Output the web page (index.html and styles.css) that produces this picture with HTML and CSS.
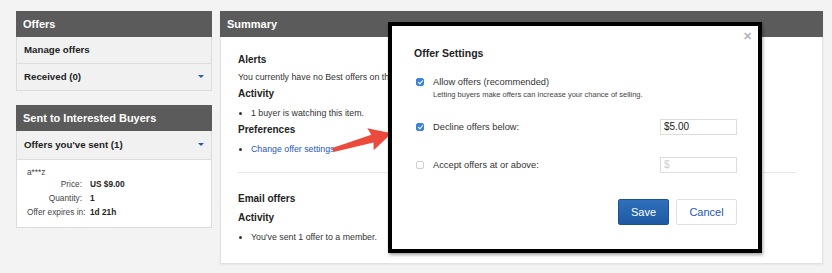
FILE: index.html
```html
<!DOCTYPE html>
<html lang="en">
<head>
    <meta charset="UTF-8">
    <title>Offers</title>
    <link rel="stylesheet" href="styles.css">
</head>
<body>

    <div class="page">
        <!-- Left column -->
        <div class="sidebar">
            <div class="panel">
                <div class="panel-head">Offers</div>
                <div class="row">Manage offers</div>
                <div class="row row-last">Received (0) <span class="caret"></span></div>
            </div>

            <div class="panel panel-sent">
                <div class="panel-head">Sent to Interested Buyers</div>
                <div class="row row-tall">Offers you've sent (1) <span class="caret"></span></div>
                <div class="sent-body">
                    <div class="buyer">a***z</div>
                    <div class="detail"><span class="label">Price:</span><span class="value">US $9.00</span></div>
                    <div class="detail"><span class="label">Quantity:</span><span class="value">1</span></div>
                    <div class="detail"><span class="label">Offer expires in:</span><span class="value">1d 21h</span></div>
                </div>
            </div>
        </div>

        <!-- Summary -->
        <div class="summary">
            <div class="panel-head">Summary</div>
            <div class="summary-body">
                <h3>Alerts</h3>
                <p>You currently have no Best offers on this item.</p>
                <h3>Activity</h3>
                <ul>
                    <li>1 buyer is watching this item.</li>
                </ul>
                <h3>Preferences</h3>
                <ul>
                    <li><a href="#">Change offer settings</a></li>
                </ul>
                <hr>
                <h3 class="email">Email offers</h3>
                <h3>Activity</h3>
                <ul>
                    <li>You've sent 1 offer to a member.</li>
                </ul>
            </div>
        </div>
    </div>

    <!-- Arrow pointing at the dialog -->
    <svg class="arrow" width="70" height="44" viewBox="0 0 70 44">
        <g transform="translate(5,34) rotate(-16)">
            <polygon points="0,-2.2 41,-4 39,-11.5 61,0 39,11.5 41,4 0,2.2" fill="#ec4a3c"/>
        </g>
    </svg>

    <!-- Offer settings dialog -->
    <div class="modal">
        <span class="close">&#x2715;</span>
        <h2>Offer Settings</h2>

        <div class="option">
            <span class="check checked"></span>
            <div>
                <div class="option-label">Allow offers (recommended)</div>
                <div class="hint">Letting buyers make offers can increase your chance of selling.</div>
            </div>
        </div>

        <div class="option option-input">
            <span class="check checked"></span>
            <div class="option-label">Decline offers below:</div>
            <div class="field">$5.00</div>
        </div>

        <div class="option option-input">
            <span class="check"></span>
            <div class="option-label">Accept offers at or above:</div>
            <div class="field placeholder">$</div>
        </div>

        <div class="actions">
            <button class="btn-save">Save</button>
            <button class="btn-cancel">Cancel</button>
        </div>
    </div>

</body>
</html>
```

FILE: styles.css
```css
body {
    font-family: "Liberation Sans", Arial, sans-serif;
    background-color: #f3f3f3;
    margin: 0;
    padding: 0;
    color: #333;
    width: 832px;
    height: 273px;
    overflow: hidden;
    position: relative;
}
.page {
    display: flex;
    gap: 8px;
    padding: 11px 9px 0 16px;
}
.sidebar {
    width: 196px;
    flex-shrink: 0;
}
.panel {
    border: 1px solid #dcdcdc;
    border-top: none;
    background-color: #f1f1f1;
}
.panel-sent {
    margin-top: 14px;
    background-color: #fff;
}
.panel-head {
    background-color: #5b5b5b;
    color: #fff;
    font-weight: bold;
    font-size: 11px;
    height: 26px;
    line-height: 26px;
    padding-left: 7px;
    margin: 0 -1px;
}
.row {
    height: 26px;
    line-height: 26px;
    padding-left: 7px;
    font-size: 9.7px;
    font-weight: bold;
    color: #222;
    border-bottom: 1px solid #dcdcdc;
    background-color: #f1f1f1;
    position: relative;
}
.row-last {
    border-bottom: none;
}
.row-tall {
    height: 28px;
    line-height: 28px;
}
.caret {
    position: absolute;
    right: 7px;
    top: 50%;
    margin-top: -2px;
    border-left: 3px solid transparent;
    border-right: 3px solid transparent;
    border-top: 3px solid #2a5ea8;
}
.sent-body {
    padding: 7px 0 8px 10px;
    font-size: 8.3px;
    color: #444;
}
.buyer {
    line-height: 10px;
}
.detail {
    display: flex;
    height: 14px;
    line-height: 14px;
}
.label {
    width: 55px;
    text-align: right;
    padding-right: 8px;
    white-space: nowrap;
}
.value {
    font-weight: bold;
    color: #222;
}
.summary {
    flex: 1;
    background-color: #fff;
    border: 1px solid #e2e2e2;
    border-top: none;
    height: 252px;
    box-shadow: 0 1px 2px rgba(0, 0, 0, 0.06);
}
.summary-body {
    padding: 12px 17px 0 17px;
}
h3 {
    font-size: 10px;
    margin: 4px 0 0 0;
    color: #222;
    line-height: 14px;
}
p {
    font-size: 8.8px;
    margin: 4px 0 0 0;
    line-height: 12px;
}
ul {
    font-size: 8.8px;
    margin: 6px 0 0 0;
    padding-left: 13px;
    line-height: 12px;
}
a {
    color: #2557b8;
    text-decoration: none;
}
hr {
    border: none;
    border-top: 1px solid #e6e6e6;
    margin: 17px 0 0 0;
    width: 558px;
}
h3.email {
    margin-top: 19px;
}
h3.email + h3 {
    margin-top: 5px;
}
.arrow {
    position: absolute;
    left: 328px;
    top: 116px;
}
.modal {
    position: absolute;
    left: 388px;
    top: 22px;
    width: 374px;
    height: 231px;
    box-sizing: border-box;
    background-color: #fff;
    border: 4px solid #000;
    box-shadow: 1px 2px 3px rgba(0, 0, 0, 0.35);
    padding: 21px 21px 0 22px;
}
.close {
    position: absolute;
    right: 6px;
    top: 4px;
    color: #b5b5b5;
    font-size: 11px;
    font-weight: bold;
}
h2 {
    font-size: 10.5px;
    margin: 0 0 17px 0;
    color: #222;
}
.option {
    display: flex;
    align-items: flex-start;
    gap: 9px;
    font-size: 9.3px;
    color: #333;
    padding-left: 2px;
}
.option-label {
    line-height: 13px;
}
.hint {
    font-size: 7.5px;
    line-height: 11px;
    color: #444;
}
.option-input {
    align-items: center;
    margin-top: 19px;
}
.option-input + .option-input {
    margin-top: 22px;
}
.check {
    width: 8px;
    height: 8px;
    border-radius: 2px;
    border: 1px solid #cfcfcf;
    box-sizing: border-box;
    margin-top: 2px;
    flex-shrink: 0;
    position: relative;
}
.option-input .check {
    margin-top: 0;
}
.checked {
    background-color: #3d83dd;
    border-color: #3d83dd;
}
.checked::after {
    content: "";
    position: absolute;
    left: 2px;
    top: 0px;
    width: 2px;
    height: 4px;
    border-right: 1.2px solid #fff;
    border-bottom: 1.2px solid #fff;
    transform: rotate(40deg);
}
.field {
    margin-left: auto;
    width: 77px;
    height: 16px;
    box-sizing: border-box;
    border: 1px solid #ddd;
    font-size: 10px;
    line-height: 14px;
    padding-left: 3px;
    color: #222;
}
.placeholder {
    color: #ccc;
}
.actions {
    display: flex;
    justify-content: flex-end;
    gap: 7px;
    margin-top: 26px;
}
button {
    height: 26px;
    font-family: "Liberation Sans", Arial, sans-serif;
    font-size: 11px;
    border-radius: 2px;
    cursor: pointer;
}
.btn-save {
    width: 51px;
    background: linear-gradient(#2f6fbc, #1e5aa3);
    border: 1px solid #1c5295;
    color: #fff;
}
.btn-cancel {
    width: 61px;
    background-color: #fff;
    border: 1px solid #e0e0e0;
    color: #2557b8;
}
```
